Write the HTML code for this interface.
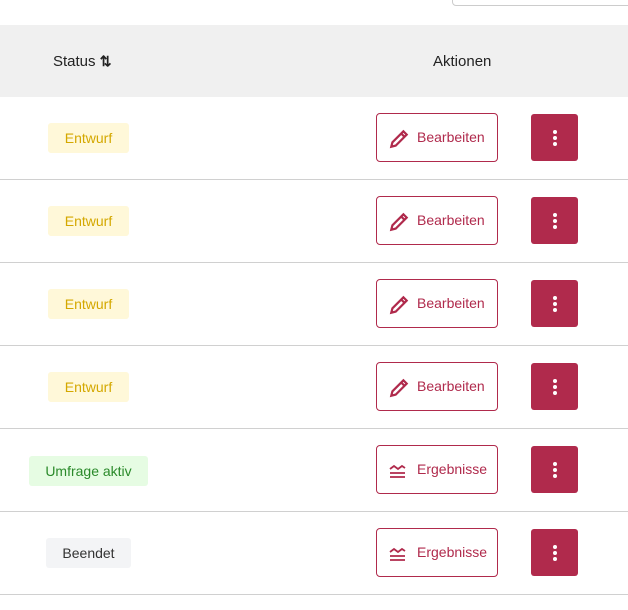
<!DOCTYPE html><html><head><style>
body{margin:0;width:628px;height:610px;background:#fff;font-family:"Liberation Sans",sans-serif;position:relative;overflow:hidden}
.a{position:absolute}
.hdr{left:0;top:25px;width:628px;height:72px;background:#f0f0f0}
.row{left:0;width:628px;height:83px;border-bottom:1px solid #d0d0d0;box-sizing:border-box}
.badge{position:absolute;height:30px;line-height:30px;font-size:14px;text-align:center;border-radius:3px;top:26px}
.btn{position:absolute;left:376px;top:16px;width:122px;height:49px;box-sizing:border-box;border:1px solid #b02a4c;border-radius:4px;color:#b02a4c;font-size:14px;line-height:47px}
.btn svg{position:absolute;left:11px;top:14px}
.btn span{position:absolute;left:40px}
.keb{position:absolute;left:531px;top:17px;width:47px;height:47px;background:#b02a4c;border-radius:3px}
.keb i{position:absolute;left:22px;width:4px;height:4px;border-radius:2px;background:#fff}
</style></head><body>
<div class="a" style="left:452px;top:-6px;width:190px;height:10px;border:1px solid #ccc;border-radius:4px"></div>
<div class="a hdr"></div>
<div class="a" style="left:53px;top:53px;font-size:15px;color:#222">Status <span style="font-size:14px;font-weight:bold">⇅</span></div>
<div class="a" style="left:433px;top:53px;font-size:15px;color:#222">Aktionen</div>

<div class="a row" style="top:97px"><div class="badge" style="left:48px;width:81px;background:#fff8d9;color:#d4a800">Entwurf</div><div class="btn"><svg width="22" height="22" viewBox="0 0 20 20"><path d="M3 17l1-4L14 3l3 3L7 16z M12 5l3 3" fill="none" stroke="#b02a4c" stroke-width="2"/></svg><span>Bearbeiten</span></div><div class="keb"><i style="top:16px"></i><i style="top:22px"></i><i style="top:28px"></i></div></div>
<div class="a row" style="top:180px"><div class="badge" style="left:48px;width:81px;background:#fff8d9;color:#d4a800">Entwurf</div><div class="btn"><svg width="22" height="22" viewBox="0 0 20 20"><path d="M3 17l1-4L14 3l3 3L7 16z M12 5l3 3" fill="none" stroke="#b02a4c" stroke-width="2"/></svg><span>Bearbeiten</span></div><div class="keb"><i style="top:16px"></i><i style="top:22px"></i><i style="top:28px"></i></div></div>
<div class="a row" style="top:263px"><div class="badge" style="left:48px;width:81px;background:#fff8d9;color:#d4a800">Entwurf</div><div class="btn"><svg width="22" height="22" viewBox="0 0 20 20"><path d="M3 17l1-4L14 3l3 3L7 16z M12 5l3 3" fill="none" stroke="#b02a4c" stroke-width="2"/></svg><span>Bearbeiten</span></div><div class="keb"><i style="top:16px"></i><i style="top:22px"></i><i style="top:28px"></i></div></div>
<div class="a row" style="top:346px"><div class="badge" style="left:48px;width:81px;background:#fff8d9;color:#d4a800">Entwurf</div><div class="btn"><svg width="22" height="22" viewBox="0 0 20 20"><path d="M3 17l1-4L14 3l3 3L7 16z M12 5l3 3" fill="none" stroke="#b02a4c" stroke-width="2"/></svg><span>Bearbeiten</span></div><div class="keb"><i style="top:16px"></i><i style="top:22px"></i><i style="top:28px"></i></div></div>
<div class="a row" style="top:429px"><div class="badge" style="left:29px;width:119px;top:27px;background:#e6fce3;color:#2a8a2a">Umfrage aktiv</div><div class="btn"><svg width="20" height="20" viewBox="0 0 20 20" style="top:15px"><path d="M2 8l4-3 4 3 4-3 3 2 M2 12h15 M2 16h15" fill="none" stroke="#b02a4c" stroke-width="1.8"/></svg><span>Ergebnisse</span></div><div class="keb"><i style="top:16px"></i><i style="top:22px"></i><i style="top:28px"></i></div></div>
<div class="a row" style="top:512px"><div class="badge" style="left:46px;width:85px;top:26px;background:#f3f4f6;color:#333">Beendet</div><div class="btn"><svg width="20" height="20" viewBox="0 0 20 20" style="top:15px"><path d="M2 8l4-3 4 3 4-3 3 2 M2 12h15 M2 16h15" fill="none" stroke="#b02a4c" stroke-width="1.8"/></svg><span>Ergebnisse</span></div><div class="keb"><i style="top:16px"></i><i style="top:22px"></i><i style="top:28px"></i></div></div>
</body></html>
